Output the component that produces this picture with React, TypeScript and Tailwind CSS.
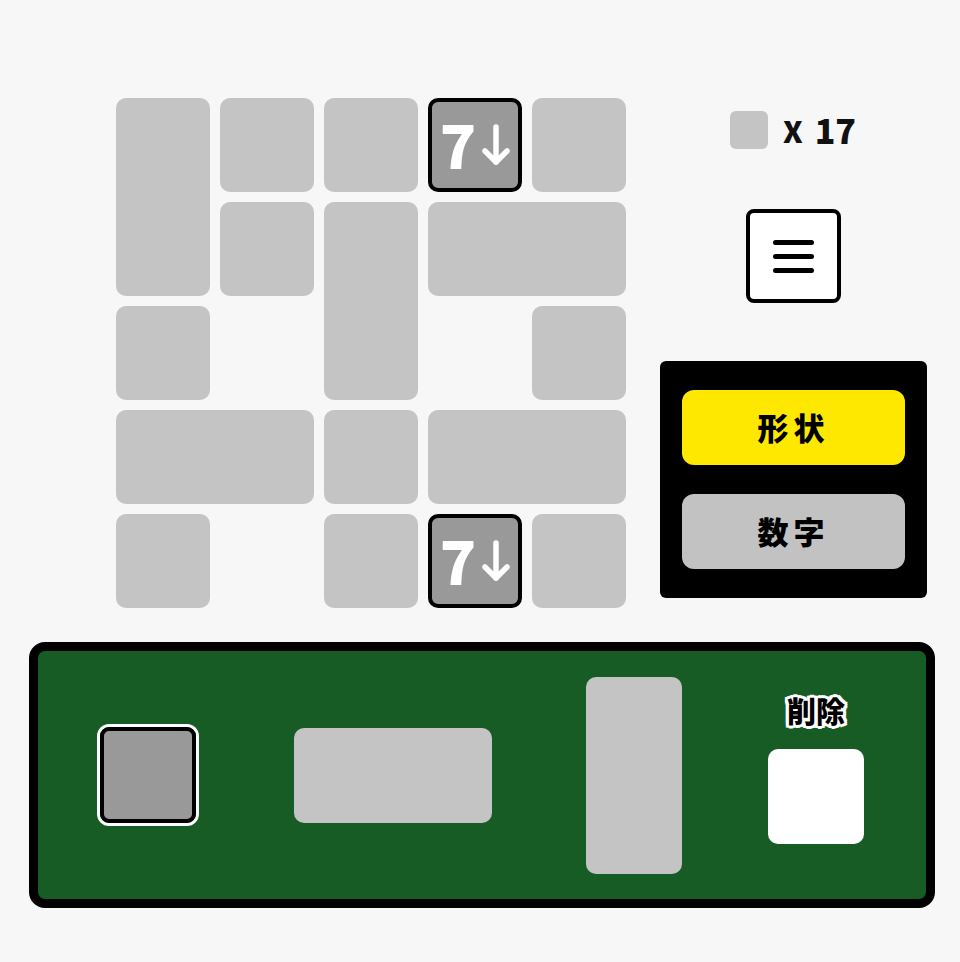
import React from "react";

type Tile = { key: string; col: string; row: string; num?: boolean };

const tiles: Tile[] = [
    { key: "a", col: "col-start-1", row: "row-start-1 row-span-2" },
    { key: "b", col: "col-start-2", row: "row-start-1" },
    { key: "c", col: "col-start-3", row: "row-start-1" },
    { key: "d", col: "col-start-4", row: "row-start-1", num: true },
    { key: "e", col: "col-start-5", row: "row-start-1" },
    { key: "f", col: "col-start-2", row: "row-start-2" },
    { key: "g", col: "col-start-3", row: "row-start-2 row-span-2" },
    { key: "h", col: "col-start-4 col-span-2", row: "row-start-2" },
    { key: "i", col: "col-start-1", row: "row-start-3" },
    { key: "j", col: "col-start-5", row: "row-start-3" },
    { key: "k", col: "col-start-1 col-span-2", row: "row-start-4" },
    { key: "l", col: "col-start-3", row: "row-start-4" },
    { key: "m", col: "col-start-4 col-span-2", row: "row-start-4" },
    { key: "n", col: "col-start-1", row: "row-start-5" },
    { key: "o", col: "col-start-3", row: "row-start-5" },
    { key: "p", col: "col-start-4", row: "row-start-5", num: true },
    { key: "q", col: "col-start-5", row: "row-start-5" },
];

const font = "font-['Noto_Sans_CJK_JP','Noto_Sans',sans-serif]";

const DownArrow = () => (
    <svg width="28" height="42" viewBox="0 0 28 42" fill="none" stroke="white" strokeWidth="5.5" strokeLinecap="round" strokeLinejoin="round">
        <path d="M14 3 V38" />
        <path d="M3 27 L14 38 L25 27" />
    </svg>
);

const NumberTile = () => (
    <div className="flex h-full w-full items-center justify-center gap-[6px] rounded-[10px] border-[4px] border-black bg-[#999999]">
        <span className={`${font} text-[60px] font-black leading-none text-white mt-[-4px]`}>7</span>
        <DownArrow />
    </div>
);

const App = () => {
    return (
        <div className={`min-h-screen bg-[#f7f7f7] pt-[98px] ${font}`}>
            <div className="flex items-start">
                <div className="ml-[116px] grid grid-cols-[repeat(5,94px)] grid-rows-[repeat(5,94px)] gap-[10px]">
                    {tiles.map((t) => (
                        <div key={t.key} className={`${t.col} ${t.row}`}>
                            {t.num ? <NumberTile /> : <div className="h-full w-full rounded-[10px] bg-[#c4c4c4]" />}
                        </div>
                    ))}
                </div>
                <div className="ml-[34px] flex w-[267px] flex-col items-center">
                    <div className="mt-[13px] flex h-[38px] items-center pr-[1px]">
                        <div className="h-[38px] w-[38px] rounded-[6px] bg-[#c4c4c4]" />
                        <span className="ml-[15px] text-[30px] font-black leading-none text-[#111]">X</span>
                        <span className="ml-[12px] text-[34px] font-black leading-none text-[#111]">17</span>
                    </div>
                    <button className="mt-[60px] flex h-[94px] w-[95px] flex-col items-center justify-center gap-[9px] rounded-[8px] border-[4px] border-black bg-white">
                        <div className="h-[5px] w-[41px] rounded-full bg-black" />
                        <div className="h-[5px] w-[41px] rounded-full bg-black" />
                        <div className="h-[5px] w-[41px] rounded-full bg-black" />
                    </button>
                    <div className="mt-[58px] flex w-[267px] flex-col gap-[29px] rounded-[6px] bg-black px-[22px] py-[29px]">
                        <button className="flex h-[75px] items-center justify-center rounded-[12px] bg-[#ffe800] text-[31px] font-black tracking-[5px] text-black">
                            形状
                        </button>
                        <button className="flex h-[75px] items-center justify-center rounded-[12px] bg-[#c2c2c2] text-[31px] font-black tracking-[5px] text-black">
                            数字
                        </button>
                    </div>
                </div>
            </div>

            <div className="mx-[29px] mt-[34px] flex h-[266px] w-[906px] items-center rounded-[16px] border-[9px] border-black bg-[#185c25]">
                <div className="ml-[59px] rounded-[12px] border-[3px] border-white">
                    <div className="h-[96px] w-[96px] rounded-[9px] border-[4px] border-black bg-[#999999]" />
                </div>
                <div className="ml-[95px] h-[95px] w-[198px] rounded-[10px] bg-[#c4c4c4]" />
                <div className="ml-[94px] h-[197px] w-[96px] rounded-[10px] bg-[#c4c4c4]" />
                <div className="mb-[14px] ml-[86px] flex w-[96px] flex-col items-center gap-[21px]">
                    <span className="text-[29px] font-black leading-[36px] text-black [text-shadow:2px_0_0_#fff,-2px_0_0_#fff,0_2px_0_#fff,0_-2px_0_#fff,2px_2px_0_#fff,-2px_-2px_0_#fff,2px_-2px_0_#fff,-2px_2px_0_#fff,3px_0_0_#fff,-3px_0_0_#fff,0_3px_0_#fff,0_-3px_0_#fff,3px_2px_0_#fff,-3px_2px_0_#fff,3px_-2px_0_#fff,-3px_-2px_0_#fff]">
                        削除
                    </span>
                    <div className="h-[95px] w-[96px] rounded-[10px] bg-white" />
                </div>
            </div>
        </div>
    );
};

export default App;
